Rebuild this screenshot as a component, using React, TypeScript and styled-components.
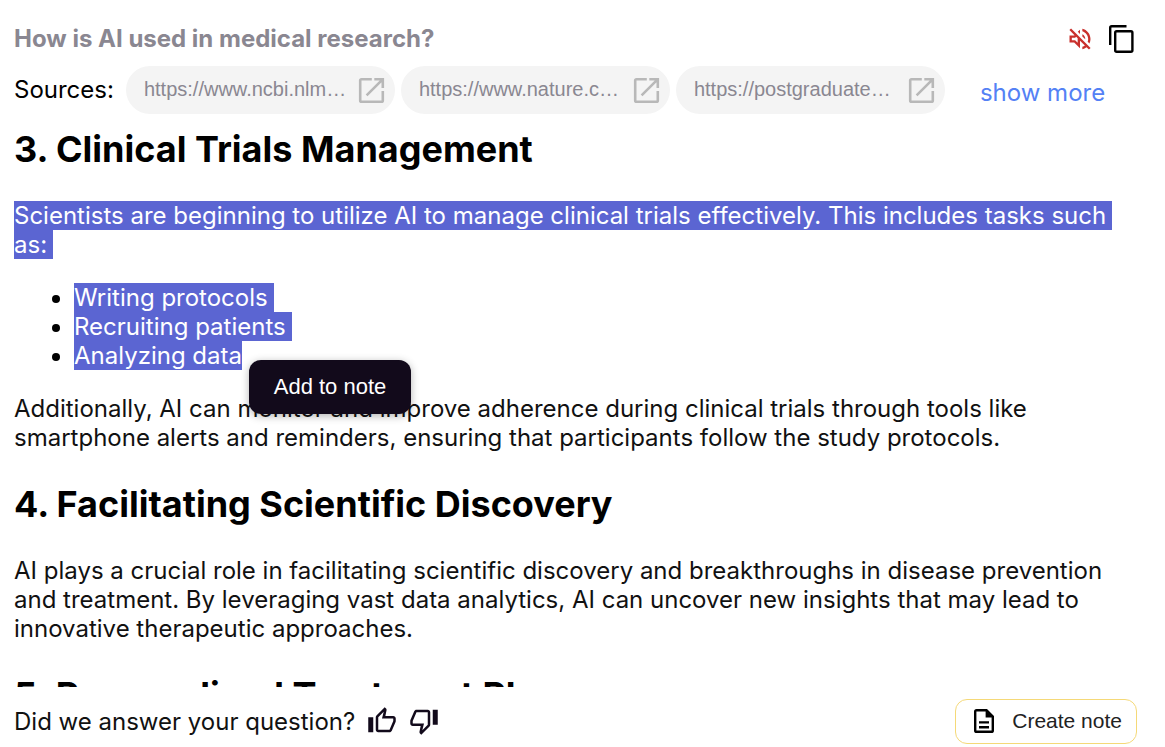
import React from 'react';
import styled, { createGlobalStyle } from 'styled-components';
import { MdOutlineVolumeOff, MdOutlineThumbUp, MdOutlineThumbDown } from 'react-icons/md';

const Global = createGlobalStyle`
  * { box-sizing: border-box; }
  body {
    margin: 0;
    background: #fff;
    color: #000;
    font-family: Inter, 'Liberation Sans', sans-serif;
    font-size: 24px;
    font-weight: 400;
  }
  button, a { font-family: inherit; }
`;

const Page = styled.main`
  display: flex;
  flex-direction: column;
  height: 100vh;
  padding: 0 14px;
  overflow: hidden;
`;

const Header = styled.header`
  display: flex;
  align-items: center;
  justify-content: space-between;
  padding: 24px 17px 0 0;
`;

const Question = styled.h1`
  margin: 0;
  color: #8a8791;
  font-size: 24px;
  line-height: 30px;
  font-weight: 700;
`;

const Actions = styled.div`
  display: flex;
  align-items: center;
  gap: 14px;
`;

const IconButton = styled.button<{ $color?: string }>`
  display: flex;
  padding: 0;
  border: 0;
  background: none;
  color: ${(p) => p.$color ?? '#120a1b'};
  cursor: pointer;
`;

const Sources = styled.nav`
  display: flex;
  align-items: center;
  height: 48px;
  margin-top: 12px;
`;

const SourcesLabel = styled.span`
  margin-right: 12px;
  line-height: 30px;
`;

const SourceList = styled.div`
  display: flex;
  gap: 6px;
`;

const SourceLink = styled.a`
  display: flex;
  align-items: center;
  justify-content: space-between;
  width: 269px;
  height: 48px;
  padding: 0 10px 0 18px;
  border-radius: 24px;
  background: #f4f4f4;
  color: #8a8791;
  font-family: 'Liberation Sans', Arial, sans-serif;
  font-size: 20px;
  text-decoration: none;
`;

const SourceUrl = styled.span`
  width: 204px;
  overflow: hidden;
  white-space: nowrap;
  text-overflow: ellipsis;
  padding-bottom: 2px;
`;

const MoreButton = styled.button`
  margin-left: 35px;
  padding: 4px 0 0;
  border: 0;
  background: none;
  color: #5481f5;
  font-size: 24px;
  cursor: pointer;
`;

const Answer = styled.article`
  position: relative;
  flex: 1;
  min-height: 0;
  margin-top: 13px;
  overflow: hidden;
`;

const Heading = styled.h2`
  margin: 0 0 30px;
  font-size: 36px;
  line-height: 44px;
  font-weight: 700;
`;

const Paragraph = styled.p<{ $last?: boolean }>`
  margin: 0 0 ${(p) => (p.$last ? 30 : 24)}px;
  color: #111;
  line-height: 29px;
`;

const List = styled.ul`
  margin: 0 0 24px;
  padding-left: 60px;
  line-height: 29px;
`;

const Selected = styled.mark<{ $end?: boolean }>`
  padding: 0 ${(p) => (p.$end ? 0 : 6)}px 0 0;
  background: #5b65d2;
  color: #fff;
  -webkit-box-decoration-break: clone;
  box-decoration-break: clone;
`;

const LastItem = styled.li`
  position: relative;
`;

const AddToNote = styled.button`
  position: absolute;
  top: 19px;
  left: 175px;
  z-index: 1;
  width: 162px;
  height: 54px;
  border: 0;
  border-radius: 12px;
  background: #120a1b;
  box-shadow: 0 2px 8px rgba(0, 0, 0, 0.3);
  color: #fff;
  font-family: 'Liberation Sans', Arial, sans-serif;
  font-size: 22px;
  white-space: nowrap;
  cursor: pointer;
`;

const Footer = styled.footer`
  display: flex;
  align-items: center;
  justify-content: space-between;
  height: 60px;
  padding: 8px 14px 0 0;
`;

const Feedback = styled.div`
  display: flex;
  align-items: center;
  gap: 12px;
  color: #111;
`;

const CreateNote = styled.button`
  display: flex;
  align-items: center;
  gap: 14px;
  height: 45px;
  padding: 0 14px;
  border: 1px solid #f5d978;
  border-radius: 12px;
  background: #fff;
  color: #222;
  font-family: 'Liberation Sans', Arial, sans-serif;
  font-size: 21px;
  cursor: pointer;
`;

const OpenIcon = () => (
  <svg width="27" height="27" viewBox="0 0 27 27" fill="none" stroke="#b8b8b8" strokeWidth="2.6" aria-hidden="true">
    <path d="M13.8 2.2H3.6Q2.2 2.2 2.2 3.6v19.8q0 1.4 1.4 1.4h19.8q1.4 0 1.4-1.4V14" />
    <path d="M16.3 2.2h8.5v8.7M24.4 2.6 8.6 18.4" />
  </svg>
);

const CopyIcon = () => (
  <svg width="26" height="30" viewBox="0 0 26 30" fill="none" stroke="#000" strokeWidth="2.4" aria-hidden="true">
    <path d="M2.2 21V3.7q0-1.5 1.5-1.5H18.5" />
    <rect x="7.2" y="7.2" width="17.2" height="20.6" rx="1.5" />
  </svg>
);

const NoteIcon = () => (
  <svg width="28" height="28" viewBox="0 0 28 28" fill="none" stroke="#000" strokeWidth="2.4" aria-hidden="true">
    <path d="M16.5 3.2H6.6Q5.2 3.2 5.2 4.6v18.8q0 1.4 1.4 1.4h14.8q1.4 0 1.4-1.4V9.5Z" />
    <path d="M15.6 3v7.5h7.6Z" fill="#000" stroke="none" />
    <path d="M9 15.4h10M9 20.2h10" />
  </svg>
);

const links = ['https://www.ncbi.nlm.nih.gov/', 'https://www.nature.com/articles', 'https://postgraduateeducation.hms.harvard.edu/'];

export default function App() {
  return (
    <>
      <Global />
      <Page>
        <Header>
          <Question>How is AI used in medical research?</Question>
          <Actions>
            <IconButton $color="#c9302c" aria-label="Unmute"><MdOutlineVolumeOff size={28} /></IconButton>
            <IconButton aria-label="Copy"><CopyIcon /></IconButton>
          </Actions>
        </Header>
        <Sources aria-label="Sources">
          <SourcesLabel>Sources:</SourcesLabel>
          <SourceList>
            {links.map((url) => (
              <SourceLink key={url} href={url}>
                <SourceUrl>{url}</SourceUrl>
                <OpenIcon />
              </SourceLink>
            ))}
          </SourceList>
          <MoreButton>show more</MoreButton>
        </Sources>
        <Answer>
          <Heading>3. Clinical Trials Management</Heading>
          <Paragraph>
            <Selected>Scientists are beginning to utilize AI to manage clinical trials effectively. This includes tasks such as:</Selected>
          </Paragraph>
          <List>
            <li><Selected>Writing protocols</Selected></li>
            <li><Selected>Recruiting patients</Selected></li>
            <LastItem>
              <Selected $end>Analyzing data</Selected>
              <AddToNote>Add to note</AddToNote>
            </LastItem>
          </List>
          <Paragraph $last>
            Additionally, AI can monitor and improve adherence during clinical trials through tools like smartphone alerts and reminders, ensuring that participants follow the study protocols.
          </Paragraph>
          <Heading>4. Facilitating Scientific Discovery</Heading>
          <Paragraph $last>
            AI plays a crucial role in facilitating scientific discovery and breakthroughs in disease prevention and treatment. By leveraging vast data analytics, AI can uncover new insights that may lead to innovative therapeutic approaches.
          </Paragraph>
          <Heading>5. Personalized Treatment Plans</Heading>
        </Answer>
        <Footer>
          <Feedback>
            <span>Did we answer your question?</span>
            <IconButton aria-label="Yes"><MdOutlineThumbUp size={30} /></IconButton>
            <IconButton aria-label="No"><MdOutlineThumbDown size={30} /></IconButton>
          </Feedback>
          <CreateNote><NoteIcon />Create note</CreateNote>
        </Footer>
      </Page>
    </>
  );
}
